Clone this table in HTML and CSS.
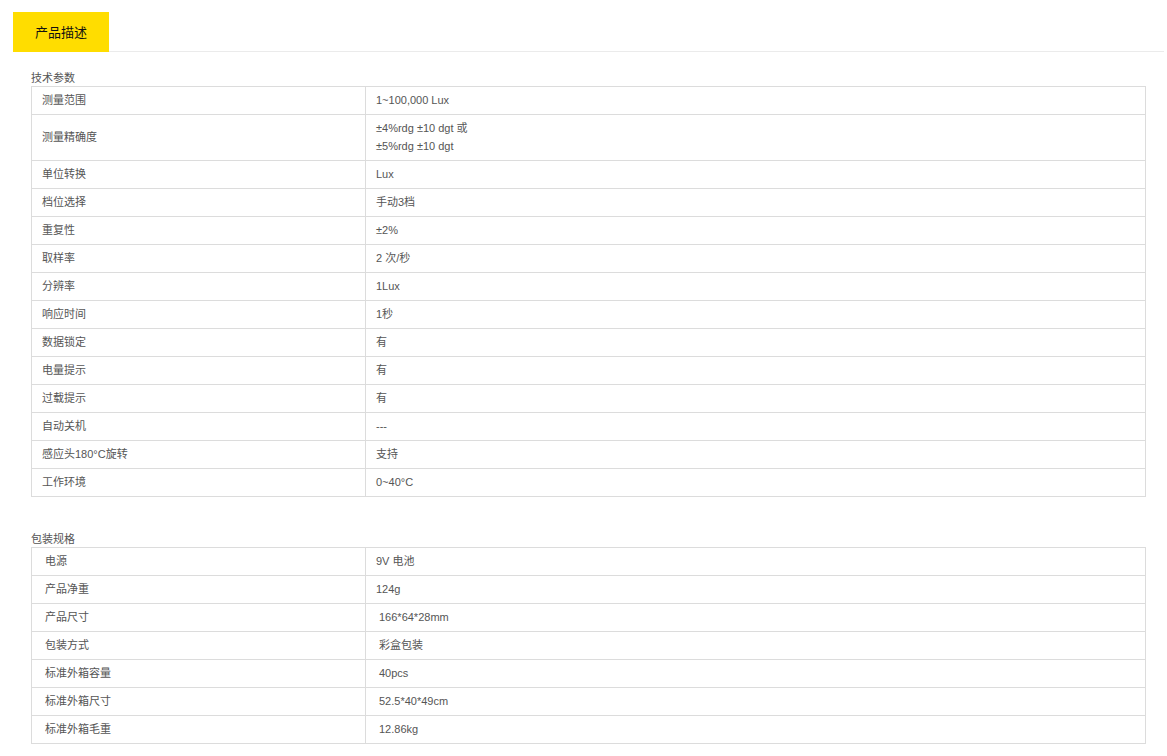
FILE: index.html
```html
<!DOCTYPE html>
<html lang="zh-CN">
<head>
<meta charset="utf-8">
<title>产品描述</title>
<link rel="stylesheet" href="styles.css">
</head>
<body>
<div class="page">
  <div class="tabs">
    <div class="tab">产品描述</div>
  </div>
  <div class="content">
    <div class="section-title first">技术参数</div>
    <table class="spec">
      <tr><td class="k">测量范围</td><td class="v">1~100,000 Lux</td></tr>
      <tr><td class="k">测量精确度</td><td class="v">±4%rdg ±10 dgt 或<br>±5%rdg ±10 dgt</td></tr>
      <tr><td class="k">单位转换</td><td class="v">Lux</td></tr>
      <tr><td class="k">档位选择</td><td class="v">手动3档</td></tr>
      <tr><td class="k">重复性</td><td class="v">±2%</td></tr>
      <tr><td class="k">取样率</td><td class="v">2 次/秒</td></tr>
      <tr><td class="k">分辨率</td><td class="v">1Lux</td></tr>
      <tr><td class="k">响应时间</td><td class="v">1秒</td></tr>
      <tr><td class="k">数据锁定</td><td class="v">有</td></tr>
      <tr><td class="k">电量提示</td><td class="v">有</td></tr>
      <tr><td class="k">过载提示</td><td class="v">有</td></tr>
      <tr><td class="k">自动关机</td><td class="v">---</td></tr>
      <tr><td class="k">感应头180°C旋转</td><td class="v">支持</td></tr>
      <tr><td class="k">工作环境</td><td class="v">0~40°C</td></tr>
    </table>
    <div class="section-title second">包装规格</div>
    <table class="spec pack">
      <tr><td class="k">电源</td><td class="v">9V 电池</td></tr>
      <tr><td class="k">产品净重</td><td class="v">124g</td></tr>
      <tr><td class="k">产品尺寸</td><td class="v in">166*64*28mm</td></tr>
      <tr><td class="k">包装方式</td><td class="v in">彩盒包装</td></tr>
      <tr><td class="k">标准外箱容量</td><td class="v in">40pcs</td></tr>
      <tr><td class="k">标准外箱尺寸</td><td class="v in">52.5*40*49cm</td></tr>
      <tr><td class="k">标准外箱毛重</td><td class="v in">12.86kg</td></tr>
    </table>
  </div>
</div>
</body>
</html>
```
FILE: styles.css
```css
html, body {
  margin: 0;
  padding: 0;
  background: #fff;
}
body {
  font-family: "Liberation Sans", Arial, "Noto Sans CJK SC", sans-serif;
  font-size: 11px;
  color: #555;
}
.page {
  margin: 12px 3px 0 13px;
}
.tabs {
  display: flex;
  border-bottom: 1px solid #ebebeb;
  height: 39px;
}
.tab {
  width: 96px;
  height: 38px;
  padding-bottom: 2px;
  background: #ffdd00;
  color: #111;
  font-size: 13px;
  display: flex;
  align-items: center;
  justify-content: center;
}
.content {
  padding-left: 18px;
}
.section-title {
  line-height: 13px;
  height: 14px;
  color: #555;
}
.section-title.first {
  margin-top: 20px;
}
.section-title.second {
  margin-top: 36px;
}
.spec {
  width: 1115px;
  border-collapse: collapse;
  border: 1px solid #dcdcdc;
}
.spec td {
  border: 1px solid #dcdcdc;
  padding: 4px 10px 5px;
  line-height: 18px;
  vertical-align: middle;
}
.spec td.k {
  width: 313px;
}
.pack td.k {
  padding-left: 13px;
  width: 310px;
}
.pack td.v.in {
  padding-left: 13px;
}
```
